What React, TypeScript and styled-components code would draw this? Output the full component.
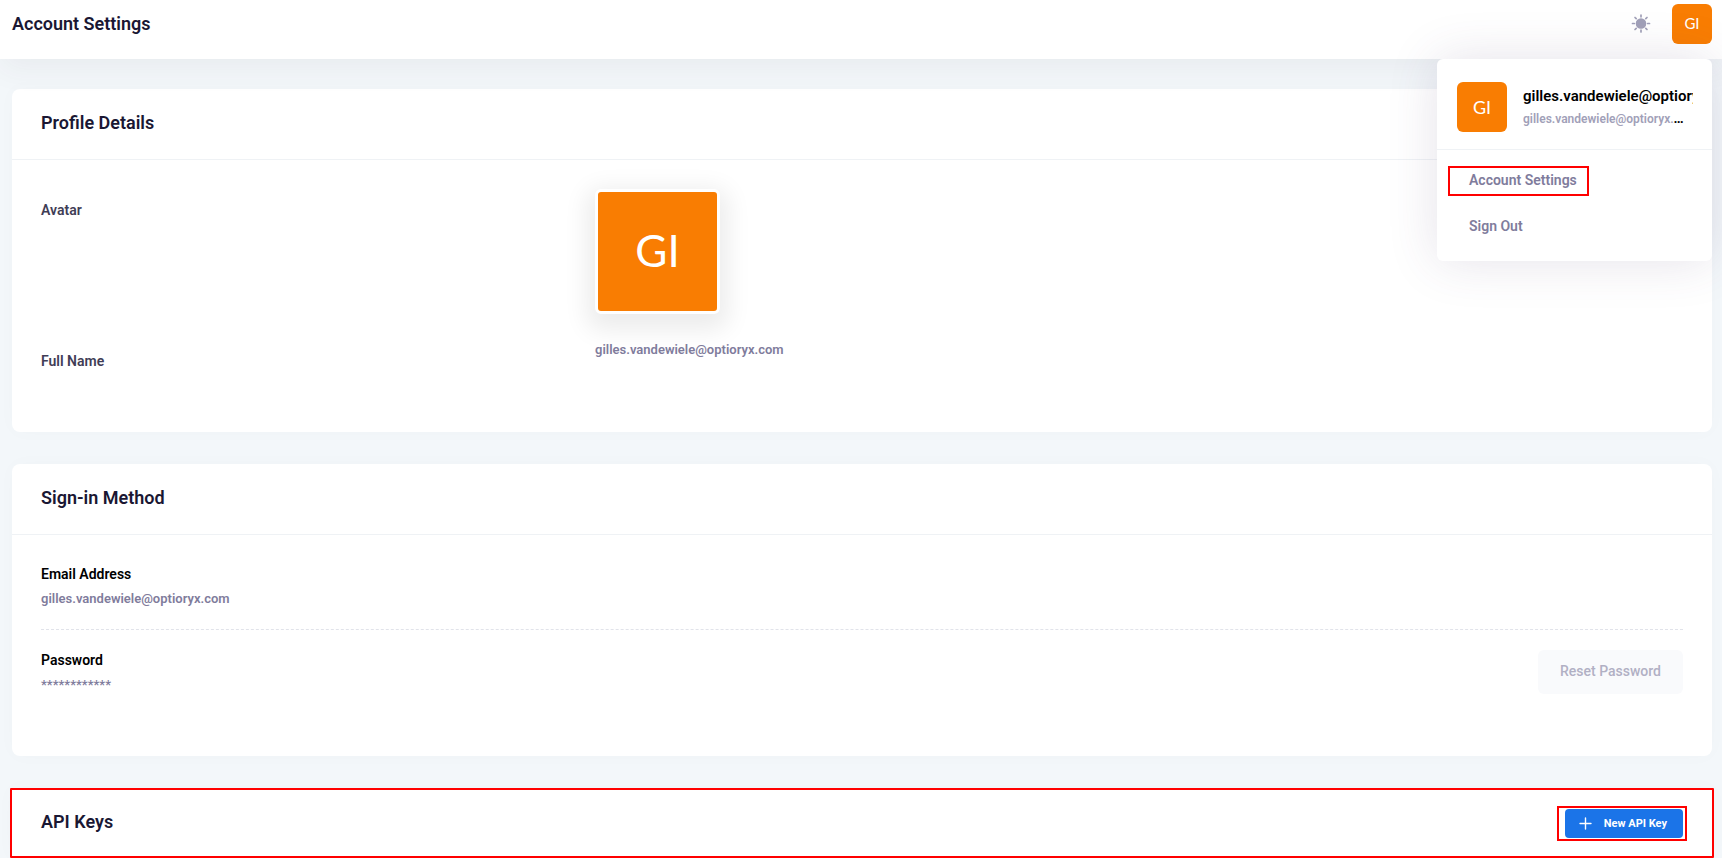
import React from 'react';
import styled, { createGlobalStyle } from 'styled-components';

const EMAIL = 'gilles.vandewiele@optioryx.com';

const GlobalStyle = createGlobalStyle`
  *, *::before, *::after { box-sizing: border-box; }
  body {
    margin: 0;
    background: #f3f7fa;
    color: #000;
    font-family: Roboto, "Liberation Sans", sans-serif;
    font-size: 13px;
    line-height: 20px;
  }
  h1, h2, h3, p, ul, dl, dt, dd { margin: 0; padding: 0; }
  ul { list-style: none; }
  button { font-family: inherit; border: 0; cursor: pointer; }
`;

const Header = styled.header`
  position: relative;
  display: flex;
  justify-content: space-between;
  height: 59px;
  padding: 4px 10px 0 12px;
  background: #fff;
  box-shadow: 0 10px 30px rgba(60, 50, 60, 0.06);
`;

const PageTitle = styled.h1`
  color: #1a1733;
  font-size: 18px;
  font-weight: 600;
  line-height: 40px;
  height: 40px;
`;

const Tools = styled.div`
  position: relative;
  display: flex;
  gap: 20px;
  height: 40px;
  align-items: center;
`;

const IconButton = styled.button`
  display: flex;
  padding: 0;
  background: none;
  color: #a1a0b8;
`;

const Avatar = styled.span<{ $size: number; $font: number; $framed?: boolean }>`
  display: flex;
  flex: none;
  align-items: center;
  justify-content: center;
  width: ${(p) => p.$size}px;
  height: ${(p) => p.$size}px;
  padding-bottom: ${(p) => (p.$framed ? 4 : 1)}px;
  border: ${(p) => (p.$framed ? '3px solid #fff' : '0')};
  border-radius: 6px;
  box-shadow: ${(p) => (p.$framed ? '0 8px 24px 8px rgba(0, 0, 0, 0.08)' : 'none')};
  background: #f97d02;
  color: #fff;
  font-family: Lato, "Liberation Sans", sans-serif;
  font-size: ${(p) => p.$font}px;
  font-weight: 400;
  line-height: 1;
`;

const AvatarButton = styled.button`
  padding: 0;
  background: none;
`;

const Menu = styled.div`
  position: absolute;
  z-index: 2;
  top: 55px;
  right: 0;
  width: 275px;
  height: 202px;
  border-radius: 6px;
  background: #fff;
  box-shadow: 0 0 50px rgba(82, 63, 105, 0.15);
`;

const MenuProfile = styled.div`
  display: flex;
  gap: 16px;
  height: 91px;
  padding: 23px 19px 0 20px;
  border-bottom: 1px solid #eff2f5;
`;

const MenuIdentity = styled.div`
  min-width: 0;
  padding-top: 3px;
`;

const MenuName = styled.div`
  overflow: hidden;
  white-space: nowrap;
  font-size: 15px;
  font-weight: 600;
  line-height: 22px;
`;

const MenuEmail = styled.div`
  overflow: hidden;
  padding-right: 4px;
  text-overflow: ellipsis;
  white-space: nowrap;
  font-size: 14px;
  font-weight: 600;
  line-height: 22px;

  a {
    color: #a1a0b8;
    font-size: 12px;
    text-decoration: none;
  }
`;

const MenuList = styled.ul`
  padding: 8px 11px;
`;

const MenuItem = styled.li`
  display: flex;
  height: 46px;
  align-items: center;
`;

const MenuLink = styled.a<{ $marked?: boolean }>`
  padding: 2px 10px 4px 19px;
  border: 2px solid ${(p) => (p.$marked ? '#f00' : 'transparent')};
  color: #7f7c9c;
  font-size: 14px;
  font-weight: 600;
  line-height: 20px;
  text-decoration: none;
`;

const Content = styled.main`
  display: flex;
  flex-direction: column;
  gap: 32px;
  padding: 30px 10px 0 12px;
`;

const Card = styled.section`
  border-radius: 8px;
  background: #fff;
  box-shadow: 0 0 20px rgba(76, 87, 125, 0.02);
`;

const MarkedCard = styled(Card)`
  margin: 0 -2px;
  border: 2px solid #f00;
  border-radius: 1px;
`;

const CardHeader = styled.div<{ $plain?: boolean }>`
  display: flex;
  align-items: center;
  justify-content: space-between;
  height: ${(p) => (p.$plain ? 66 : 71)}px;
  padding: 0 29px;
  border-bottom: ${(p) => (p.$plain ? '0' : '1px solid #eff2f5')};
`;

const CardTitle = styled.h2`
  padding-bottom: 2px;
  color: #1a1733;
  font-size: 18px;
  font-weight: 600;
  line-height: 24px;
`;

const CardBody = styled.div`
  padding: 29px 29px 61px;
`;

const Field = styled.dl`
  display: grid;
  grid-template-columns: repeat(12, 1fr);
  column-gap: 20px;

  & + & { margin-top: 26px; }

  dt {
    grid-column: span 4;
    padding-top: 11px;
    color: #3f3d56;
    font-size: 14px;
    font-weight: 600;
  }

  dd { grid-column: span 8; }
`;

const Muted = styled.span`
  color: #7f7c9c;
  font-size: 13px;
  font-weight: 600;
`;

const Setting = styled.div`
  display: flex;
  align-items: flex-start;
  justify-content: space-between;
`;

const SettingText = styled.div`
  display: flex;
  flex-direction: column;
  gap: 5px;
`;

const SettingTitle = styled.h3`
  font-size: 14px;
  font-weight: 600;
  line-height: 20px;
`;

const Divider = styled.hr`
  margin: 20px 0;
  border: 0;
  border-top: 1px dashed #e1e3ea;
`;

const LightButton = styled.button`
  height: 44px;
  padding: 0 22px 2px;
  border-radius: 6px;
  background: #f9fafc;
  color: #b1b0c4;
  font-size: 14px;
  font-weight: 500;
`;

const ButtonMark = styled.div`
  margin-right: -4px;
  padding: 1px 2px 1px 6px;
  border: 2px solid #f00;
`;

const PrimaryButton = styled.button`
  display: flex;
  align-items: center;
  gap: 12px;
  height: 29px;
  padding: 0 16px 0 14px;
  border-radius: 4px;
  background: #1b74e8;
  color: #fff;
  font-size: 11px;
  font-weight: 700;
`;

const SunIcon = () => (
  <svg width="22" height="22" viewBox="0 0 22 22" fill="none" stroke="currentColor" strokeWidth="1.7" strokeLinecap="round" aria-hidden="true">
    <circle cx="11" cy="10.5" r="5.3" fill="currentColor" stroke="none" />
    <path d="M11 2v1.8M11 17.2v1.8M2.5 10.5h1.8M17.7 10.5h1.8M5 4.5l1.2 1.2M15.8 15.3l1.2 1.2M5 16.5l1.2-1.2M15.8 5.7l1.2-1.2" />
  </svg>
);

const PlusIcon = () => (
  <svg width="13" height="13" viewBox="0 0 13 13" fill="none" stroke="currentColor" strokeWidth="1.4" strokeLinecap="round" aria-hidden="true">
    <path d="M6.5 1v11M1 6.5h11" />
  </svg>
);

export default function App() {
  return (
    <>
      <GlobalStyle />
      <Header>
        <PageTitle>Account Settings</PageTitle>
        <Tools>
          <IconButton type="button" aria-label="Toggle theme">
            <SunIcon />
          </IconButton>
          <AvatarButton type="button" aria-label="Account menu">
            <Avatar $size={40} $font={15}>GI</Avatar>
          </AvatarButton>
          <Menu>
            <MenuProfile>
              <Avatar $size={50} $font={18}>GI</Avatar>
              <MenuIdentity>
                <MenuName>{EMAIL}</MenuName>
                <MenuEmail>
                  <a href={`mailto:${EMAIL}`}>{EMAIL}</a>
                </MenuEmail>
              </MenuIdentity>
            </MenuProfile>
            <MenuList>
              <MenuItem>
                <MenuLink href="#account" $marked>Account Settings</MenuLink>
              </MenuItem>
              <MenuItem>
                <MenuLink href="#sign-out">Sign Out</MenuLink>
              </MenuItem>
            </MenuList>
          </Menu>
        </Tools>
      </Header>

      <Content>
        <Card>
          <CardHeader>
            <CardTitle>Profile Details</CardTitle>
          </CardHeader>
          <CardBody>
            <Field>
              <dt>Avatar</dt>
              <dd>
                <Avatar $size={125} $font={44} $framed>GI</Avatar>
              </dd>
            </Field>
            <Field>
              <dt>Full Name</dt>
              <dd>
                <Muted>{EMAIL}</Muted>
              </dd>
            </Field>
          </CardBody>
        </Card>

        <Card>
          <CardHeader>
            <CardTitle>Sign-in Method</CardTitle>
          </CardHeader>
          <CardBody>
            <Setting>
              <SettingText>
                <SettingTitle>Email Address</SettingTitle>
                <Muted>{EMAIL}</Muted>
              </SettingText>
            </Setting>
            <Divider />
            <Setting>
              <SettingText>
                <SettingTitle>Password</SettingTitle>
                <Muted>************</Muted>
              </SettingText>
              <LightButton type="button">Reset Password</LightButton>
            </Setting>
          </CardBody>
        </Card>

        <MarkedCard>
          <CardHeader $plain>
            <CardTitle>API Keys</CardTitle>
            <ButtonMark>
              <PrimaryButton type="button">
                <PlusIcon />
                New API Key
              </PrimaryButton>
            </ButtonMark>
          </CardHeader>
        </MarkedCard>
      </Content>
    </>
  );
}
